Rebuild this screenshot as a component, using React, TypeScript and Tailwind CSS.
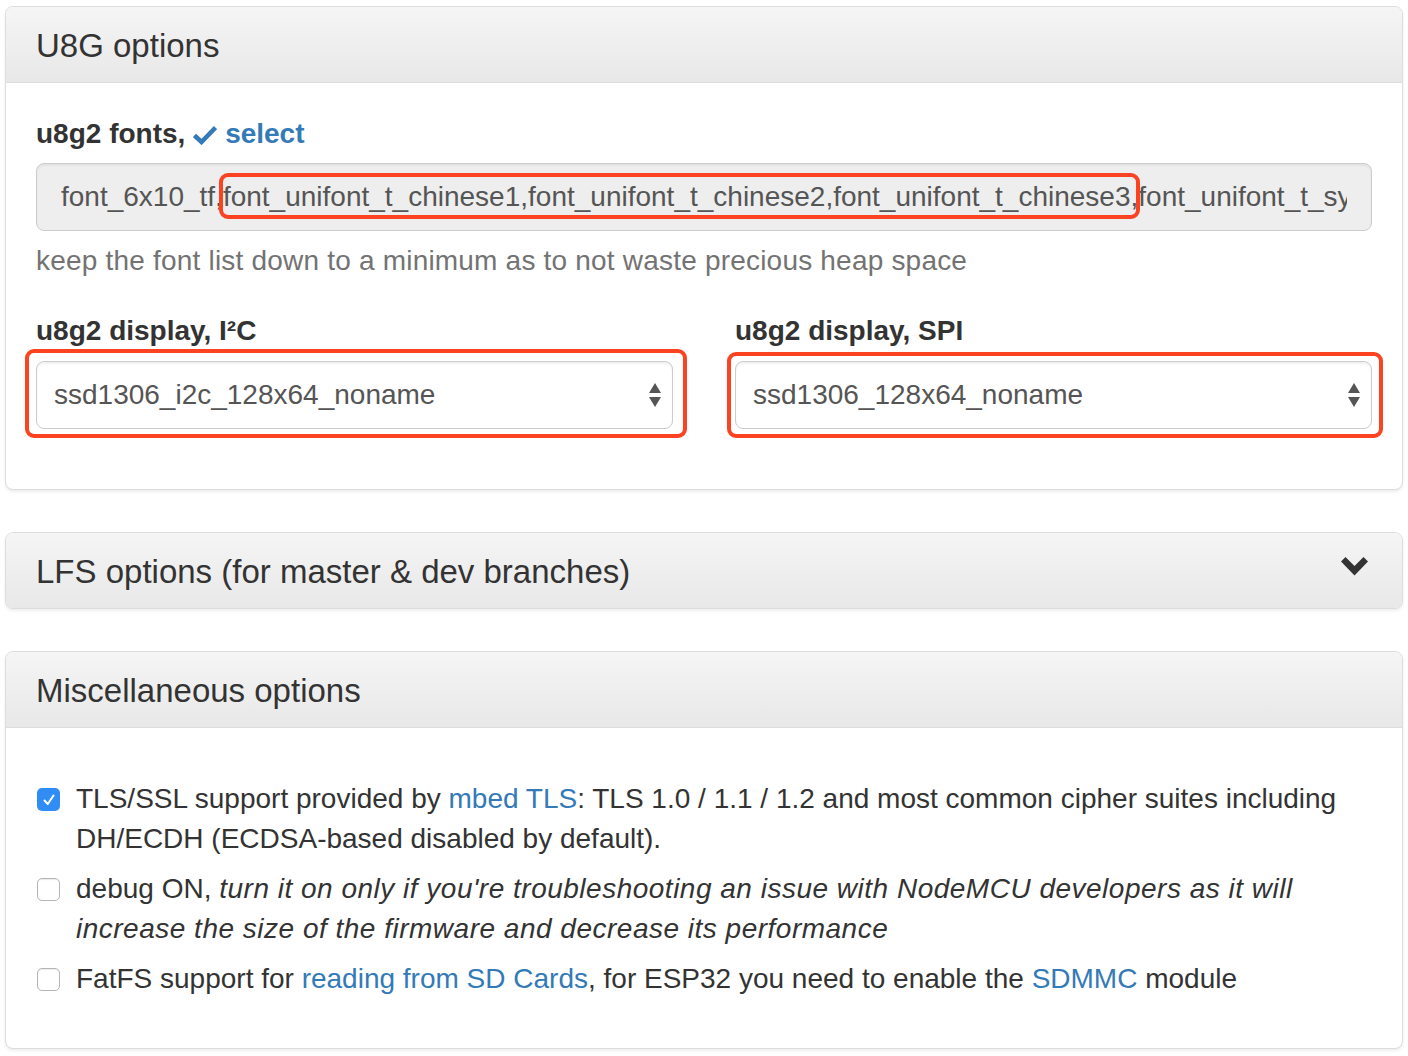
import React from 'react'

// ── small drawings ───────────────────────────
function SelectArrows() {
  return (
    <svg width="14" height="26" viewBox="0 0 14 26" className="shrink-0">
      <path d="M7 1 L13 11 L1 11 Z" fill="#555" />
      <path d="M1 15 L13 15 L7 25 Z" fill="#555" />
    </svg>
  )
}

function ChevronDown() {
  return (
    <svg width="27" height="19" viewBox="0 0 27 19">
      <polygon points="0,4.5 4.5,0 13.5,9 22.5,0 27,4.5 13.5,18.5" fill="#333" />
    </svg>
  )
}

function Checkbox({ checked }: { checked?: boolean }) {
  if (checked) {
    return (
      <span className="absolute left-[-39px] top-[9px] w-[23px] h-[23px] rounded-[5px] bg-[#2f8df5] flex items-center justify-center">
        <svg width="14" height="14" viewBox="0 0 14 14">
          <path d="M2.5 7.5 L5.8 11 L11.5 2.5" stroke="#fff" strokeWidth="2" fill="none" strokeLinecap="round" strokeLinejoin="round" />
        </svg>
      </span>
    )
  }
  return (
    <span className="absolute left-[-39px] top-[9px] w-[23px] h-[23px] rounded-[5px] bg-white border border-[#b5b5b5] shadow-[inset_0_1px_1px_rgba(0,0,0,0.08)]" />
  )
}

function Highlight({ className }: { className: string }) {
  return <span className={`absolute border-[4px] border-[#fb4321] rounded-[9px] pointer-events-none ${className}`} />
}

function Panel({ title, chevron, children }: { title: string; chevron?: boolean; children?: React.ReactNode }) {
  return (
    <div className="border border-[#dddddd] rounded-[8px] bg-white shadow-[0_2px_3px_rgba(0,0,0,0.07)] overflow-hidden">
      <div
        className={`px-[30px] pt-[21px] pb-[19px] bg-gradient-to-b from-[#f5f5f5] to-[#e8e8e8] flex items-center justify-between ${children ? 'border-b border-[#dddddd]' : ''}`}
      >
        <h3 className="text-[33px] leading-[35px] text-[#333] font-normal">{title}</h3>
        {chevron && (
          <div className="mr-[4px] -mt-[10px]">
            <ChevronDown />
          </div>
        )}
      </div>
      {children && <div className="p-[30px]">{children}</div>}
    </div>
  )
}

function SelectBox({ value }: { value: string }) {
  return (
    <div className="h-[68px] rounded-[8px] border border-[#cccccc] bg-white shadow-[inset_0_2px_2px_rgba(0,0,0,0.06)] flex items-center justify-between pl-[17px] pr-[10px] text-[#555]">
      <span>{value}</span>
      <SelectArrows />
    </div>
  )
}

export default function App() {
  return (
    <div className="min-h-screen bg-white pt-[6px] px-[5px] text-[28px] leading-[40px] text-[#333] font-['Liberation_Sans',Arial,sans-serif]">
      <div className="flex flex-col gap-[42px]">
        {/* U8G */}
        <Panel title="U8G options">
          <div className="mb-[30px]">
            <label className="block font-bold pt-[1px] -mb-[1px]">
              u8g2 fonts,{' '}
              <a className="text-[#337ab7] inline-flex items-baseline gap-[8px]">
                <svg width="24" height="20" viewBox="0 0 24 20" className="self-center translate-y-[1px]">
                  <path d="M1.5 10.5 L8.5 17 L22.5 2.5" stroke="#337ab7" strokeWidth="4.5" fill="none" />
                </svg>
                select
              </a>
            </label>
            <div className="mt-[10px] h-[68px] rounded-[8px] border border-[#cccccc] bg-[#eeeeee] shadow-[inset_0_2px_2px_rgba(0,0,0,0.05)] px-[24px] flex items-center text-[#555]">
              <div className="overflow-hidden whitespace-nowrap w-full leading-[32px] py-[8px]">
                font_6x10_tf,
                <span className="relative">
                  font_unifont_t_chinese1,font_unifont_t_chinese2,font_unifont_t_chinese3,
                  <Highlight className="-left-[4px] -right-[2px] -top-[8px] -bottom-[7px]" />
                </span>
                font_unifont_t_symbols,font_unifont_t_greek
              </div>
            </div>
            <p className="mt-[10px] text-[#737373] tracking-[0.2px]">keep the font list down to a minimum as to not waste precious heap space</p>
          </div>

          <div className="grid grid-cols-2 gap-x-[62px]">
            <div>
              <label className="block font-bold mb-[10px]">u8g2 display, I²C</label>
              <div className="relative">
                <SelectBox value="ssd1306_i2c_128x64_noname" />
                <Highlight className="-left-[11px] -right-[14px] -top-[12px] -bottom-[9px]" />
              </div>
            </div>
            <div>
              <label className="block font-bold mb-[10px]">u8g2 display, SPI</label>
              <div className="relative">
                <SelectBox value="ssd1306_128x64_noname" />
                <Highlight className="-left-[8px] -right-[11px] -top-[9px] -bottom-[9px]" />
              </div>
            </div>
          </div>
          <div className="h-[30px]" />
        </Panel>

        {/* LFS */}
        <Panel title="LFS options (for master & dev branches)" chevron />

        {/* Misc */}
        <Panel title="Miscellaneous options">
          <div className="flex flex-col gap-[10px] pt-[21px] pb-[19px] pl-[40px]">
            <div className="relative">
              <Checkbox checked />
              TLS/SSL support provided by <a className="text-[#337ab7]">mbed TLS</a>: TLS 1.0 / 1.1 / 1.2 and most common
              cipher suites including DH/ECDH (ECDSA-based disabled by default).
            </div>
            <div className="relative">
              <Checkbox />
              debug ON,{' '}
              <em className="tracking-[0.5px]">
                turn it on only if you're troubleshooting an issue with NodeMCU developers as it will increase the size of
                the firmware and decrease its performance
              </em>
            </div>
            <div className="relative">
              <Checkbox />
              FatFS support for <a className="text-[#337ab7]">reading from SD Cards</a>, for ESP32 you need to enable the{' '}
              <a className="text-[#337ab7]">SDMMC</a> module
            </div>
          </div>
        </Panel>
      </div>
    </div>
  )
}
